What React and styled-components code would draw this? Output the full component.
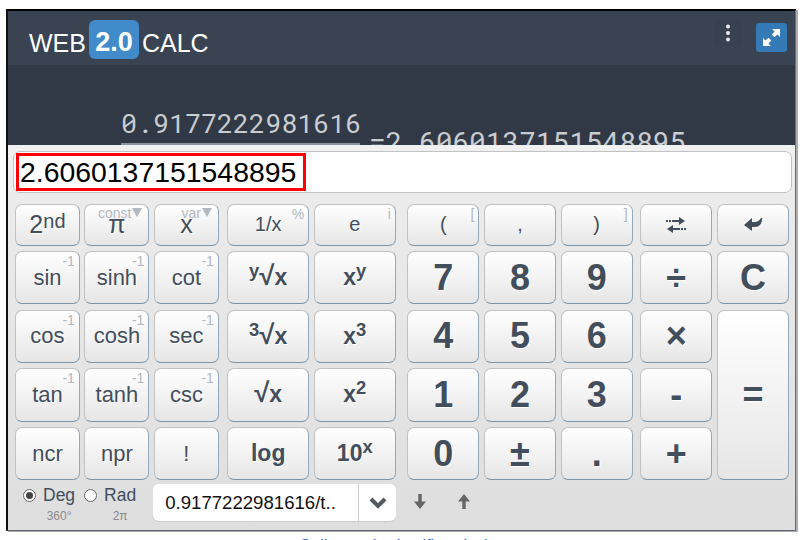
import React from 'react';
import styled, { createGlobalStyle } from 'styled-components';

const GlobalStyle = createGlobalStyle`
  html, body {
    margin: 0;
    height: 540px;
    overflow: hidden;
    background: #fff;
    font-family: "Liberation Sans", Arial, sans-serif;
  }
`;

const Frame = styled.div`
  box-sizing: border-box;
  width: 790px;
  height: 522px;
  margin: 9px 0 0 6px;
  border-top: 2px solid #000;
  border-left: 2px solid #111;
  border-right: 1px solid #666d78;
  border-bottom: 1px solid #5c6472;
  box-shadow: 2px 1px 0 #aeaeae;
  overflow: hidden;
`;

const TitleBar = styled.div`
  height: 54px;
  box-sizing: border-box;
  background: #3a4352;
  display: flex;
  align-items: center;
  padding: 3px 8px 0 21px;
  color: #fff;
  font-size: 25px;
`;

const Word = styled.span`
  margin-top: 7px;
`;

const Chip = styled.span`
  display: inline-block;
  width: 50px;
  height: 39px;
  margin: 0 3px;
  border-radius: 6px;
  background: #428bca;
  font-weight: bold;
  font-size: 27px;
  line-height: 45px;
  text-align: center;
`;

const TitleTools = styled.div`
  margin-left: auto;
  display: flex;
  align-items: center;
  gap: 14px;
`;

const MenuButton = styled.div`
  width: 28px;
  height: 26px;
  margin-top: -13px;
  border-radius: 5px;
  background: #384150;
  display: flex;
  align-items: center;
  justify-content: center;
`;

const ExpandButton = styled.div`
  width: 31px;
  height: 29px;
  margin-top: -4px;
  border-radius: 3px;
  background: #337ab7;
  display: flex;
  align-items: center;
  justify-content: center;
`;

const Display = styled.div`
  height: 80px;
  background: #303945;
  color: #c9ccd0;
  font-family: "Roboto Mono", "DejaVu Sans Mono", monospace;
  font-size: 26.7px;
  line-height: 30px;
  display: flex;
  padding: 43px 0 0 113px;
  box-sizing: border-box;
  overflow: hidden;
  white-space: nowrap;
`;

const Fraction = styled.div`
  width: 239px;
  height: 37px;
  border-bottom: 2px solid #8d939b;
  flex: none;
  box-sizing: border-box;
`;

const Equals = styled.div`
  margin: 19px 0 0 9px;
  font-size: 27.8px;
`;

const Panel = styled.div`
  height: 385px;
  box-sizing: border-box;
  background: linear-gradient(#f1f1f1, #ececec 10%, #dedede);
  padding: 6px 3px 0 5px;
`;

const InputBox = styled.div`
  height: 42px;
  box-sizing: border-box;
  background: #fff;
  border: 1px solid #c2c2c2;
  border-radius: 7px;
  padding: 1px 2px;
  display: flex;
`;

const Result = styled.div`
  width: 290px;
  height: 38px;
  box-sizing: border-box;
  border: 3px solid #f00;
  padding-left: 1px;
  color: #000;
  font-size: 28.4px;
  line-height: 32px;
`;

const Keypad = styled.div`
  display: flex;
  margin: 10.5px 0 0 2px;
`;

const Group = styled.div`
  display: grid;
  flex: none;
  width: ${p => p.$width}px;
  margin-left: ${p => p.$left || 0}px;
  grid-template-columns: repeat(${p => p.$cols}, 1fr);
  grid-template-rows: 42px 53.2px 53.2px 53.2px 53.2px;
  column-gap: 4.6px;
  row-gap: 5.5px;
`;

const Key = styled.button`
  position: relative;
  padding: 0;
  box-sizing: border-box;
  border: 1px solid #c2c2c2;
  border-bottom-color: #7a95aa;
  border-right-color: #93a8b8;
  border-radius: 7px;
  background: linear-gradient(#fff, #e6e6e6);
  color: #434e5c;
  font-family: "Liberation Sans", Arial, sans-serif;
  font-size: ${p => p.$size || 22}px;
  font-weight: ${p => (p.$bold ? 'bold' : 'normal')};
  text-shadow: 1px 1px 0 #fff;
  white-space: nowrap;
  grid-row: ${p => (p.$rowSpan ? `span ${p.$rowSpan}` : 'auto')};
  display: flex;
  align-items: center;
  justify-content: center;
`;

const Sup = styled.sup`
  font-size: 0.8em;
  line-height: 0;
  vertical-align: ${p => p.$raise || 0.42}em;
`;

const Root = styled.span`
  font-size: 1.2em;
  line-height: 0;
`;

const Corner = styled.span`
  position: absolute;
  top: 2px;
  right: 4px;
  color: #b2b8bf;
  font-size: 14px;
  font-weight: normal;
  line-height: 14px;
  text-shadow: none;
`;

const TopLabel = styled.span`
  position: absolute;
  top: 1px;
  right: 6px;
  color: #b4b9c0;
  font-size: 14px;
  line-height: 14px;
  text-shadow: none;
  display: flex;
  align-items: center;
  gap: 1px;
`;

const Tri = styled.span`
  width: 0;
  height: 0;
  border-left: 5px solid transparent;
  border-right: 5px solid transparent;
  border-top: 9px solid #b4b9c0;
`;

const BottomBar = styled.div`
  display: flex;
  align-items: flex-start;
  margin: 4px 0 0 10px;
  height: 38px;
`;

const Radio = styled.div`
  display: grid;
  grid-template-columns: 13px auto;
  column-gap: 7px;
  align-items: center;
  justify-items: center;
  color: #434e5c;
  font-size: 17.5px;
  line-height: 22px;
  margin-right: ${p => p.$right}px;
`;

const RadioDot = styled.span`
  width: 13px;
  height: 13px;
  box-sizing: border-box;
  border-radius: 50%;
  border: 1px solid #666;
  background: #fff;
  display: flex;
  align-items: center;
  justify-content: center;
  &::after {
    content: "";
    width: 7px;
    height: 7px;
    border-radius: 50%;
    background: ${p => (p.$on ? '#444' : 'transparent')};
  }
`;

const RadioHint = styled.span`
  grid-column: 2;
  color: #8a8a8a;
  font-size: 12px;
  line-height: 16px;
  margin-top: 2px;
`;

const History = styled.div`
  width: 243px;
  height: 37px;
  box-sizing: border-box;
  background: #fff;
  border-radius: 6px;
  box-shadow: 0 1px 0 #ccc;
  display: flex;
  align-items: center;
  font-size: 18.6px;
  color: #111;
  margin-left: 17px;
`;

const HistoryText = styled.div`
  flex: 1;
  padding-left: 12px;
  white-space: nowrap;
`;

const Chevron = styled.div`
  width: 37px;
  height: 100%;
  border-left: 1px solid #ccc;
  display: flex;
  align-items: center;
  justify-content: center;
`;

const Arrows = styled.div`
  display: flex;
  gap: 32px;
  margin: 10px 0 0 18px;
`;

const Footer = styled.div`
  margin-top: 6px;
  text-align: center;
  color: #3366cc;
  font-size: 16px;
  line-height: 18px;
  padding-left: 12px;
`;

const ExchangeIcon = () => (
  <svg width="20" height="16" viewBox="0 0 20 16" fill="#434e5c">
    <path d="M0 3h2v2H0zM3 3h2v2H3zM6 3h7V0l6 4-6 4V5H6z" />
    <path d="M20 11h-2v2h2zM17 11h-2v2h2zM14 11H7V8l-6 4 6 4v-3h7z" />
  </svg>
);

const EnterIcon = () => (
  <svg width="19" height="15" viewBox="0 0 19 15" fill="#434e5c">
    <path d="M0 8l8-7v4h3c2 0 4-1 6-4 1 0 2 0 1 1 0 5-3 8-7 8H8v4z" />
  </svg>
);

const ExpandIcon = () => (
  <svg width="19" height="19" viewBox="0 0 19 19" fill="#fff">
    <path d="M10 1h8v8l-2.600-2.600L12.500 9.300 9.700 6.500l2.900-2.900zM9 18H1v-8l2.600 2.600 2.900-2.900 2.800 2.800-2.900 2.900z" />
  </svg>
);

const Dots = () => (
  <svg width="6" height="20" viewBox="0 0 6 20" fill="#e8eaed">
    <circle cx="3" cy="3.500" r="2" />
    <circle cx="3" cy="10" r="2" />
    <circle cx="3" cy="16.500" r="2" />
  </svg>
);

const ChevronIcon = () => (
  <svg width="18" height="12" viewBox="0 0 18 12" fill="none" stroke="#54585f" strokeWidth="4">
    <path d="M2 2l7 7 7-7" />
  </svg>
);

const ArrowIcon = ({ up }) => (
  <svg width="12" height="15" viewBox="0 0 14 16" fill="#666" preserveAspectRatio="none" style={up ? { transform: 'rotate(180deg)' } : undefined}>
    <path d="M5 0h4v8h5l-7 8-7-8h5z" />
  </svg>
);

const scientific = [
  { label: <>2<Sup $raise={0.26}>nd</Sup></>, size: 25 },
  { label: 'π', size: 25, top: 'const' },
  { label: 'x', size: 25, top: 'var' },
  ...['sin', 'sinh', 'cot', 'cos', 'cosh', 'sec', 'tan', 'tanh', 'csc'].map(label => ({ label, corner: '-1' })),
  { label: 'ncr' },
  { label: 'npr' },
  { label: '!' },
];

const powers = [
  { label: '1/x', size: 20, corner: '%' },
  { label: 'e', size: 20, corner: 'i' },
  { label: <><Sup>y</Sup><Root>√</Root>x</>, bold: true, size: 23 },
  { label: <>x<Sup>y</Sup></>, bold: true, size: 23 },
  { label: <><Sup>3</Sup><Root>√</Root>x</>, bold: true, size: 23 },
  { label: <>x<Sup>3</Sup></>, bold: true, size: 23 },
  { label: <><Root>√</Root>x</>, bold: true, size: 23 },
  { label: <>x<Sup>2</Sup></>, bold: true, size: 23 },
  { label: 'log', bold: true, size: 23 },
  { label: <>10<Sup>x</Sup></>, bold: true, size: 23 },
];

const numbers = [
  { label: '(', size: 20, corner: '[' },
  { label: ',', size: 20 },
  { label: ')', size: 20, corner: ']' },
  ...['7', '8', '9', '4', '5', '6', '1', '2', '3', '0', '±', '.'].map(label => ({ label, bold: true, size: 36 })),
];

const renderKey = (key, i) => (
  <Key key={i} $size={key.size} $bold={key.bold}>
    <span>{key.label}</span>
    {key.corner && <Corner>{key.corner}</Corner>}
    {key.top && <TopLabel>{key.top}<Tri /></TopLabel>}
  </Key>
);

const App = () => (
  <>
    <GlobalStyle />
    <Frame>
      <TitleBar>
        <Word>WEB</Word>
        <Chip>2.0</Chip>
        <Word>CALC</Word>
        <TitleTools>
          <MenuButton><Dots /></MenuButton>
          <ExpandButton><ExpandIcon /></ExpandButton>
        </TitleTools>
      </TitleBar>
      <Display>
        <Fraction>0.9177222981616</Fraction>
        <Equals>=2.6060137151548895</Equals>
      </Display>
      <Panel>
        <InputBox>
          <Result>2.6060137151548895</Result>
        </InputBox>
        <Keypad>
          <Group $cols={3} $width={203.9}>{scientific.map(renderKey)}</Group>
          <Group $cols={2} $width={168.6} $left={8.3}>{powers.map(renderKey)}</Group>
          <Group $cols={3} $width={225.6} $left={11.4}>{numbers.map(renderKey)}</Group>
          <Group $cols={2} $width={149.2} $left={7.3}>
            <Key><ExchangeIcon /></Key>
            <Key><EnterIcon /></Key>
            <Key $size={36} $bold>÷</Key>
            <Key $size={36} $bold>C</Key>
            <Key $size={36} $bold>×</Key>
            <Key $size={36} $bold $rowSpan={3}>=</Key>
            <Key $size={36} $bold>-</Key>
            <Key $size={36} $bold>+</Key>
          </Group>
        </Keypad>
        <BottomBar>
          <Radio $right={9}>
            <RadioDot $on /><span>Deg</span>
            <RadioHint>360°</RadioHint>
          </Radio>
          <Radio $right={0}>
            <RadioDot /><span>Rad</span>
            <RadioHint>2π</RadioHint>
          </Radio>
          <History>
            <HistoryText>0.9177222981616/t..</HistoryText>
            <Chevron><ChevronIcon /></Chevron>
          </History>
          <Arrows>
            <ArrowIcon />
            <ArrowIcon up />
          </Arrows>
        </BottomBar>
      </Panel>
    </Frame>
    <Footer>Online and scientific calculator</Footer>
  </>
);

export default App;
